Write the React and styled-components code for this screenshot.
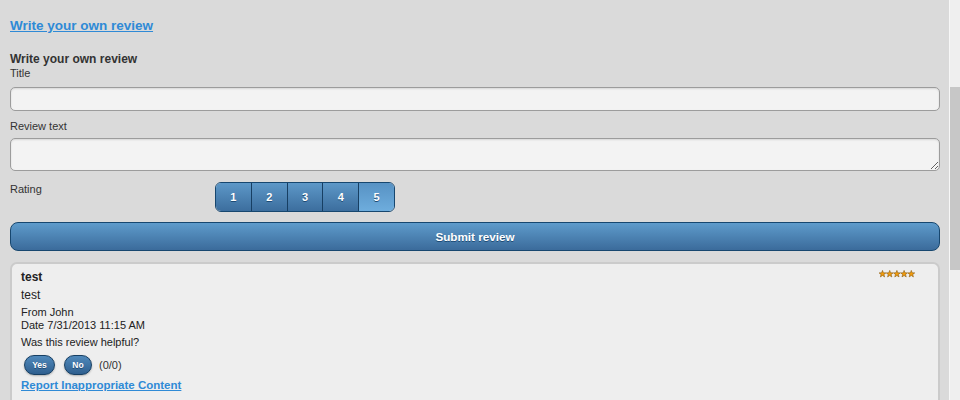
import React from "react";
import styled, { createGlobalStyle } from "styled-components";

const Global = createGlobalStyle`
  html, body { margin: 0; padding: 0; background: #dadada; }
  body { font-family: "Liberation Sans", Arial, Helvetica, sans-serif; color: #333; }
  * { box-sizing: border-box; }
`;

const Shell = styled.div`
  display: flex;
  align-items: flex-start;
  width: 960px;
  height: 400px;
  overflow: hidden;
  background: #dadada;
`;

const Main = styled.div`
  width: 949px;
  flex-shrink: 0;
  padding: 0 9px 0 10px;
  display: flex;
  flex-direction: column;
  & > * { flex-shrink: 0; }
`;

const ScrollTrack = styled.div`
  width: 11px;
  height: 400px;
  flex-shrink: 0;
  border-left: 1px solid #f7f7f7;
  background: #efefef;
  display: flex;
  flex-direction: column;
`;

const ScrollThumb = styled.div`
  margin-top: 87px;
  height: 183px;
  background: #c7c7c7;
`;

const TopLink = styled.a`
  display: block;
  margin-top: 18px;
  font-size: 13.5px;
  line-height: 16px;
  font-weight: bold;
  color: #2f8ad6;
  text-decoration: underline;
  align-self: flex-start;
`;

const Heading = styled.h3`
  margin: 18px 0 0;
  font-size: 12px;
  line-height: 14px;
  font-weight: bold;
  color: #333;
`;

const Label = styled.label`
  display: block;
  margin-top: ${(p) => p.$mt}px;
  font-size: 11px;
  line-height: 13px;
  color: #333;
`;

const fieldCss = `
  display: block;
  width: 100%;
  background: #f3f3f3;
  border: 1px solid #9c9c9c;
  border-radius: 5px;
  box-shadow: inset 0 1px 2px rgba(0,0,0,0.12);
  font-family: inherit;
  font-size: 12px;
  outline: none;
  padding: 4px 6px;
`;

const TextInput = styled.input`
  ${fieldCss}
  margin-top: 7px;
  height: 24px;
`;

const TextArea = styled.textarea`
  ${fieldCss}
  margin-top: 5px;
  height: 33px;
  resize: vertical;
`;

const RatingRow = styled.div`
  display: flex;
  margin-top: 11px;
  height: 30px;
`;

const RatingLabel = styled.div`
  width: 205px;
  padding-top: 1px;
  font-size: 11px;
  line-height: 13px;
`;

const RatingGroup = styled.div`
  display: flex;
  width: 180px;
  height: 30px;
  border: 1px solid #17476f;
  border-radius: 6px;
  overflow: hidden;
`;

const RateBtn = styled.button`
  flex: 1;
  border: none;
  border-left: ${(p) => (p.$first ? "none" : "1px solid #173f63")};
  background: ${(p) =>
    p.$active
      ? "linear-gradient(#5792c4, #6eaddd)"
      : "linear-gradient(#5d98c8, #3c6e9e)"};
  color: #fff;
  font-family: inherit;
  font-size: 11px;
  font-weight: bold;
  text-shadow: 0 1px 0 #1d4b75;
  padding: 0;
  cursor: pointer;
`;

const SubmitBtn = styled.button`
  display: block;
  width: 100%;
  margin-top: 10px;
  height: 29px;
  border: 1px solid #17476f;
  border-radius: 8px;
  background: linear-gradient(#5e9bcb, #3b6b9b);
  color: #fff;
  font-family: inherit;
  font-size: 11.7px;
  font-weight: bold;
  text-shadow: 0 1px 0 #1d4b75;
  cursor: pointer;
`;

const Card = styled.div`
  margin-top: 11px;
  border: 2px solid #cbcbcb;
  border-radius: 7px;
  background: #eeeeee;
  padding: 6px 9px 20px;
`;

const CardHead = styled.div`
  display: flex;
  justify-content: space-between;
  align-items: flex-start;
`;

const CardTitle = styled.div`
  font-size: 12px;
  line-height: 14px;
  font-weight: bold;
  color: #222;
`;

const Stars = styled.svg`
  margin-right: 14px;
  display: block;
`;

const Line = styled.div`
  margin-top: ${(p) => p.$mt}px;
  font-size: ${(p) => p.$fs || 11}px;
  line-height: ${(p) => p.$lh || 13}px;
  color: #222;
`;

const VoteRow = styled.div`
  display: flex;
  align-items: center;
  margin-top: 6px;
  padding-left: 3px;
  gap: 9px;
`;

const VoteBtn = styled.button`
  width: ${(p) => p.$w}px;
  height: 20px;
  border: 1px solid #173f63;
  border-radius: 10px;
  background: linear-gradient(#5089bb, #2f5f8f);
  color: #fff;
  font-family: inherit;
  font-size: 8.5px;
  font-weight: bold;
  padding: 0;
  text-shadow: 0 1px 0 #1d4b75;
  box-shadow: 0 1px 2px rgba(0,0,0,0.25);
`;

const Count = styled.span`
  margin-left: -2px;
  font-size: 11px;
  line-height: 13px;
  color: #333;
`;

const ReportLink = styled.a`
  display: block;
  margin-top: 3px;
  font-size: 11.5px;
  line-height: 14px;
  font-weight: bold;
  color: #2f8ad6;
  text-decoration: underline;
  width: max-content;
`;

const starPts =
  "3.5,-0.1 4.38,2.29 6.92,2.39 4.93,3.96 5.62,6.41 3.5,5 1.38,6.41 2.07,3.96 0.08,2.39 2.62,2.29";

function StarRating({ count = 5 }) {
  return (
    <Stars width="36" height="8" viewBox="0 -0.5 36 8">
      {Array.from({ length: count }).map((_, i) => (
        <polygon
          key={i}
          transform={`translate(${i * 7.2} 0)`}
          points={starPts}
          fill="#f29c0c"
          stroke="#8a5a10"
          strokeWidth="0.6"
        />
      ))}
    </Stars>
  );
}

export default function App() {
  return (
    <>
      <Global />
      <Shell>
        <Main>
          <TopLink href="#">Write your own review</TopLink>
          <Heading>Write your own review</Heading>
          <Label $mt={1}>Title</Label>
          <TextInput type="text" />
          <Label $mt={9}>Review text</Label>
          <TextArea />
          <RatingRow>
            <RatingLabel>Rating</RatingLabel>
            <RatingGroup>
              {[1, 2, 3, 4, 5].map((n) => (
                <RateBtn key={n} $first={n === 1} $active={n === 5}>
                  {n}
                </RateBtn>
              ))}
            </RatingGroup>
          </RatingRow>
          <SubmitBtn>Submit review</SubmitBtn>
          <Card>
            <CardHead>
              <CardTitle>test</CardTitle>
              <StarRating count={5} />
            </CardHead>
            <Line $mt={4} $fs={12} $lh={14}>test</Line>
            <Line $mt={4}>From John</Line>
            <Line $mt={0}>Date 7/31/2013 11:15 AM</Line>
            <Line $mt={4}>Was this review helpful?</Line>
            <VoteRow>
              <VoteBtn $w={31}>Yes</VoteBtn>
              <VoteBtn $w={28}>No</VoteBtn>
              <Count>(0/0)</Count>
            </VoteRow>
            <ReportLink href="#">Report Inappropriate Content</ReportLink>
          </Card>
        </Main>
        <ScrollTrack>
          <ScrollThumb />
        </ScrollTrack>
      </Shell>
    </>
  );
}
